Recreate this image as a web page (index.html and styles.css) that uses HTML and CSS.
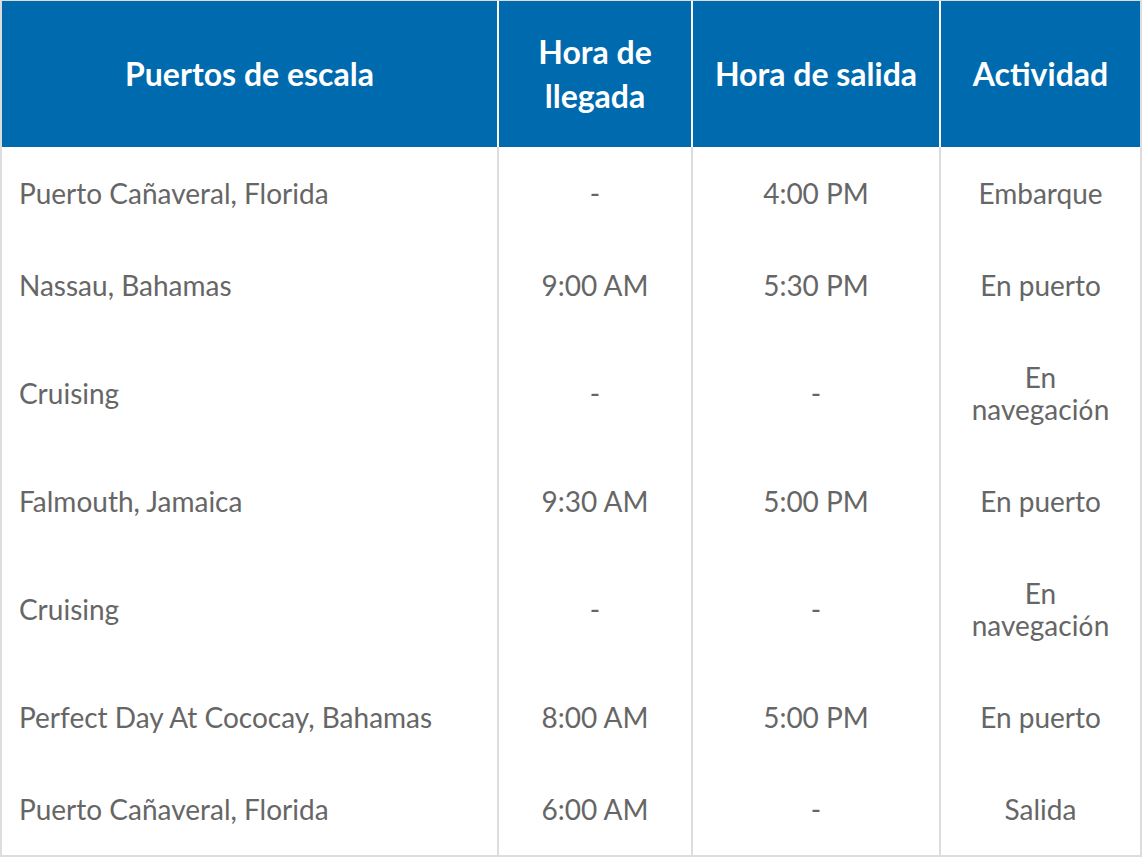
FILE: index.html
```html
<!DOCTYPE html>
<html lang="es">
<head>
<meta charset="utf-8">
<title>Itinerario</title>
<link rel="stylesheet" href="styles.css">
</head>
<body>
<table class="itin">
  <thead>
    <tr>
      <th class="c1">Puertos de escala</th>
      <th class="c2">Hora de llegada</th>
      <th class="c3">Hora de salida</th>
      <th class="c4">Actividad</th>
    </tr>
  </thead>
  <tbody>
    <tr><td class="port">Puerto Cañaveral, Florida</td><td>-</td><td>4:00 PM</td><td>Embarque</td></tr>
    <tr><td class="port">Nassau, Bahamas</td><td>9:00 AM</td><td>5:30 PM</td><td>En puerto</td></tr>
    <tr><td class="port">Cruising</td><td>-</td><td>-</td><td>En navegaci<span class="fb">ó</span>n</td></tr>
    <tr><td class="port">Falmouth, Jamaica</td><td>9:30 AM</td><td>5:00 PM</td><td>En puerto</td></tr>
    <tr><td class="port">Cruising</td><td>-</td><td>-</td><td>En navegaci<span class="fb">ó</span>n</td></tr>
    <tr><td class="port">Perfect Day At Cococay, Bahamas</td><td>8:00 AM</td><td>5:00 PM</td><td>En puerto</td></tr>
    <tr><td class="port">Puerto Cañaveral, Florida</td><td>6:00 AM</td><td>-</td><td>Salida</td></tr>
  </tbody>
</table>
</body>
</html>
```

FILE: styles.css
```css
html, body {
  margin: 0;
  padding: 0;
  background: #ffffff;
}

.itin {
  width: 1142px;
  table-layout: fixed;
  border-collapse: separate;
  border-spacing: 0;
  border-top: 1px solid #dddddd;
  border-left: 2px solid #dddddd;
  border-right: 2px solid #dddddd;
  border-bottom: 2px solid #dddddd;
  font-family: Lato, "Liberation Sans", sans-serif;
}

.itin th,
.itin td {
  box-sizing: border-box;
  vertical-align: middle;
  text-align: center;
}

.itin th {
  background: #006aae;
  color: #ffffff;
  font-weight: 700;
  font-size: 32px;
  line-height: 44px;
  padding: 29px 12px;
  border-left: 2px solid #ffffff;
}

.itin th.c1 { width: 495px; border-left: none; }
.itin th.c2 { width: 194px; }
.itin th.c3 { width: 248px; }
.itin th.c4 { width: 201px; }

.itin td {
  color: #666666;
  font-size: 28px;
  line-height: 32px;
  padding: 30px 16px;
  border-left: 2px solid #dddddd;
}

.itin td.port {
  text-align: left;
  padding-left: 17px;
  border-left: none;
}

.fb {
  font-family: "DejaVu Sans", sans-serif;
  font-size: 25px;
  line-height: 1px;
}
```
